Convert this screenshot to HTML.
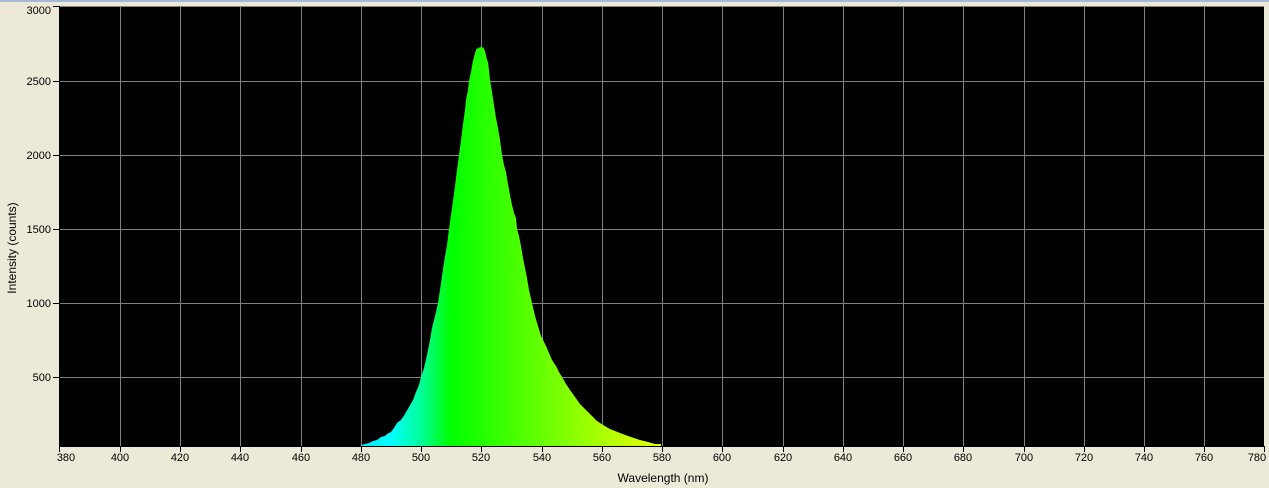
<!DOCTYPE html>
<html><head><style>html,body{margin:0;padding:0;background:#ECE9D8;}svg{display:block}</style></head><body>
<svg width="1269" height="488" xmlns="http://www.w3.org/2000/svg" font-family="Liberation Sans, sans-serif" font-size="11">
<defs>
<linearGradient id="g" gradientUnits="userSpaceOnUse" x1="361" y1="0" x2="661" y2="0">
<stop offset="0" stop-color="#00E8FF"/>
<stop offset="0.1" stop-color="#00FFFF"/>
<stop offset="0.2" stop-color="#00FF99"/>
<stop offset="0.3" stop-color="#00FF00"/>
<stop offset="0.4" stop-color="#22FF00"/>
<stop offset="0.6" stop-color="#66FF00"/>
<stop offset="0.8" stop-color="#AAFF00"/>
<stop offset="1" stop-color="#E8FF00"/>
</linearGradient>
</defs>
<rect x="0" y="0" width="1269" height="488" fill="#ECE9D8"/>
<rect x="0" y="0" width="1269" height="2" fill="#A6B9D9"/>
<rect x="59" y="6" width="1205" height="440" fill="#000"/>
<g stroke="#808080" stroke-width="1">
<line x1="59" y1="6.5" x2="1264" y2="6.5"/>
<line x1="59" y1="81.5" x2="1264" y2="81.5"/>
<line x1="59" y1="155.5" x2="1264" y2="155.5"/>
<line x1="59" y1="229.5" x2="1264" y2="229.5"/>
<line x1="59" y1="303.5" x2="1264" y2="303.5"/>
<line x1="59" y1="377.5" x2="1264" y2="377.5"/>
<path d="M120.5,6V446M180.5,6V446M240.5,6V446M301.5,6V446M361.5,6V446M421.5,6V446M481.5,6V446M542.5,6V446M602.5,6V446M662.5,6V446M722.5,6V446M783.5,6V446M843.5,6V446M903.5,6V446M963.5,6V446M1024.5,6V446M1084.5,6V446M1144.5,6V446M1204.5,6V446"/>
</g>
<path fill="url(#g)" d="M361,446 L361,445 L365,444 L369,443 L373,441 L377,440 L381,437 L385,436 L387,434 L391,432 L394,428 L397,423 L401,420 L405,414 L409,407 L413,400 L416,392 L419,385 L421,377 L424,368 L427,355 L430,340 L432,328 L434,320 L436,312 L438,303 L441,283 L444,262 L447,245 L449,229 L452,208 L455,186 L457,170 L459,155 L461,140 L463,124 L465,110 L466,100 L468,90 L469,81 L471,72 L472,66 L473,61 L474,57 L475,53 L476,50 L477,48 L478,49 L479,47 L480,48 L481,46 L482,48 L483,47 L484,49 L485,51 L486,55 L487,60 L488,62 L489,70 L490,80 L492,92 L494,105 L496,118 L498,128 L500,140 L502,155 L504,165 L506,172 L508,184 L510,195 L512,205 L514,213 L516,218 L517,229 L519,236 L521,246 L523,258 L525,268 L527,278 L529,290 L532,303 L535,316 L538,326 L541,336 L543,340 L546,346 L549,353 L552,360 L556,366 L559,372 L562,377 L566,384 L570,390 L575,397 L580,404 L585,409 L590,414 L597,421 L603,425 L610,429 L620,433 L628,436 L634,438 L640,440 L648,442 L655,444 L661,444 L661,446 Z"/>
<g stroke="#000" stroke-width="1">
<line x1="59.5" y1="6" x2="59.5" y2="446"/>
<line x1="59" y1="446.5" x2="1265" y2="446.5"/>
<line x1="53" y1="6.5" x2="59" y2="6.5"/>
<line x1="53" y1="81.5" x2="59" y2="81.5"/>
<line x1="53" y1="155.5" x2="59" y2="155.5"/>
<line x1="53" y1="229.5" x2="59" y2="229.5"/>
<line x1="53" y1="303.5" x2="59" y2="303.5"/>
<line x1="53" y1="377.5" x2="59" y2="377.5"/>
<path d="M59.5,446V452M120.5,446V452M180.5,446V452M240.5,446V452M301.5,446V452M361.5,446V452M421.5,446V452M481.5,446V452M542.5,446V452M602.5,446V452M662.5,446V452M722.5,446V452M783.5,446V452M843.5,446V452M903.5,446V452M963.5,446V452M1024.5,446V452M1084.5,446V452M1144.5,446V452M1204.5,446V452M1264.5,446V452"/>
</g>
<g text-anchor="end" fill="#000">
<text x="51" y="14">3000</text>
<text x="51" y="85">2500</text>
<text x="51" y="159">2000</text>
<text x="51" y="233">1500</text>
<text x="51" y="307">1000</text>
<text x="51" y="381">500</text>
</g>
<g text-anchor="middle" fill="#000">
<text x="66" y="461">380</text>
<text x="120" y="461">400</text>
<text x="180" y="461">420</text>
<text x="240" y="461">440</text>
<text x="301" y="461">460</text>
<text x="361" y="461">480</text>
<text x="421" y="461">500</text>
<text x="481" y="461">520</text>
<text x="542" y="461">540</text>
<text x="602" y="461">560</text>
<text x="662" y="461">580</text>
<text x="722" y="461">600</text>
<text x="783" y="461">620</text>
<text x="843" y="461">640</text>
<text x="903" y="461">660</text>
<text x="963" y="461">680</text>
<text x="1024" y="461">700</text>
<text x="1084" y="461">720</text>
<text x="1144" y="461">740</text>
<text x="1204" y="461">760</text>
<text x="1257" y="461">780</text>
</g>
<text x="663" y="482" text-anchor="middle" font-size="12">Wavelength (nm)</text>
<text transform="translate(16,248) rotate(-90)" text-anchor="middle" font-size="12">Intensity (counts)</text>
</svg>
</body></html>
